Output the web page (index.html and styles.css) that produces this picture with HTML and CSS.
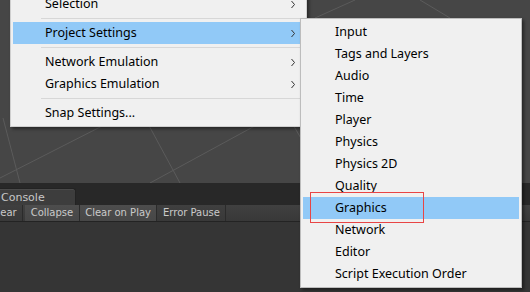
FILE: index.html
```html
<!DOCTYPE html>
<html lang="en">
<head>
    <meta charset="UTF-8">
    <meta name="viewport" content="width=device-width, initial-scale=1.0">
    <title>Project Settings menu</title>
    <link rel="stylesheet" href="styles.css">
</head>
<body>

<div class="editor">
    <div class="scene">
        <!-- scene view grid -->
        <svg class="grid" width="530" height="183" viewBox="0 0 530 183">
            <line x1="3" y1="118" x2="20" y2="183"/>
            <line x1="0" y1="178" x2="110" y2="122"/>
            <line x1="146" y1="120" x2="180" y2="183"/>
            <line x1="150" y1="183" x2="262" y2="122"/>
            <line x1="289" y1="118" x2="302" y2="140"/>
            <line x1="315" y1="18" x2="355" y2="0"/>
            <line x1="420" y1="0" x2="450" y2="18"/>
        </svg>
    </div>

    <div class="console">
        <div class="tabbar">
            <div class="tab">Console</div>
        </div>
        <div class="toolbar">
            <button class="tb-btn">Clear</button>
            <span class="tb-space"></span>
            <button class="tb-btn on">Collapse</button>
            <button class="tb-btn on">Clear on Play</button>
            <button class="tb-btn">Error Pause</button>
        </div>
        <div class="log"></div>
    </div>

    <div class="menu main-menu">
        <div class="item sub">Selection</div>
        <div class="sep"></div>
        <div class="item sub active">Project Settings</div>
        <div class="sep"></div>
        <div class="item sub">Network Emulation</div>
        <div class="item sub">Graphics Emulation</div>
        <div class="sep"></div>
        <div class="item">Snap Settings...</div>
    </div>

    <div class="menu sub-menu">
        <div class="item">Input</div>
        <div class="item">Tags and Layers</div>
        <div class="item">Audio</div>
        <div class="item">Time</div>
        <div class="item">Player</div>
        <div class="item">Physics</div>
        <div class="item">Physics 2D</div>
        <div class="item">Quality</div>
        <div class="item active">Graphics</div>
        <div class="item">Network</div>
        <div class="item">Editor</div>
        <div class="item">Script Execution Order</div>
    </div>

    <div class="mark"></div>
</div>

</body>
</html>
```

FILE: styles.css
```css
body {
    margin: 0;
    background-color: #464646;
    overflow: hidden;
}
.editor {
    position: relative;
    width: 530px;
    height: 292px;
    display: flex;
    flex-direction: column;
    overflow: hidden;
}
.scene {
    height: 183px;
    background-color: #464646;
}
.grid {
    display: block;
}
.grid line {
    stroke: #5b5b5b;
    stroke-width: 1;
}

/* console panel, cut off at the left edge */
.console {
    flex: 1;
    display: flex;
    flex-direction: column;
    margin-left: -15px;
    font-family: "DejaVu Sans", sans-serif;
    color: #c8c8c8;
}
.tabbar {
    height: 22px;
    background-color: #282828;
    display: flex;
    align-items: flex-end;
}
.tab {
    width: 74px;
    height: 16px;
    padding-left: 16px;
    font-size: 11px;
    line-height: 17px;
    background-color: #3d3d3d;
    border-top: 1px solid #232323;
    border-right: 1px solid #232323;
    border-top-right-radius: 3px;
    box-shadow: inset 0 1px #4a4a4a;
}
.toolbar {
    height: 16px;
    display: flex;
    background: linear-gradient(#404040, #383838);
    border-bottom: 1px solid #232323;
}
.tb-btn {
    font-family: inherit;
    font-size: 10px;
    color: #cacaca;
    padding: 0 5.5px;
    margin: 0;
    border: 0;
    border-right: 1px solid #2b2b2b;
    background: linear-gradient(#3f3f3f, #393939);
    line-height: 16px;
    height: 16px;
}
.tb-btn.on {
    background: linear-gradient(#4d4d4d, #474747);
}
.tb-space {
    width: 2px;
}
.log {
    flex: 1;
    background-color: #353535;
}

/* windows style context menus */
.menu {
    position: absolute;
    background-color: #f0f0f0;
    font-family: "Noto Sans", sans-serif;
    font-size: 12.5px;
    color: #000;
    padding: 2px;
    box-shadow: 2px 2px 3px rgba(0, 0, 0, 0.45);
}
.main-menu {
    left: 10px;
    top: -10px;
    width: 291px;
    border: 1px solid #cfcfcf;
}
.sub-menu {
    left: 300px;
    top: 18px;
    width: 216px;
    border: 1px solid #bdbdbd;
}
.item {
    height: 22px;
    line-height: 22px;
    padding: 0 9px 0 32px;
    display: flex;
    justify-content: space-between;
    align-items: center;
    white-space: nowrap;
}
.item.active {
    background-color: #91c9f7;
}
.item.sub::after {
    content: "";
    width: 4px;
    height: 7px;
    background: url("data:image/svg+xml,%3Csvg xmlns='http://www.w3.org/2000/svg' width='4' height='7'%3E%3Cpolyline points='0.5,0 3.5,3.5 0.5,7' fill='none' stroke='%23333' stroke-width='1'/%3E%3C/svg%3E") no-repeat;
}
.sep {
    height: 1px;
    margin: 3px 0 3px 28px;
    background-color: #d7d7d7;
}
.mark {
    position: absolute;
    left: 310px;
    top: 192px;
    width: 112px;
    height: 29px;
    border: 1px solid #e84545;
}
```
